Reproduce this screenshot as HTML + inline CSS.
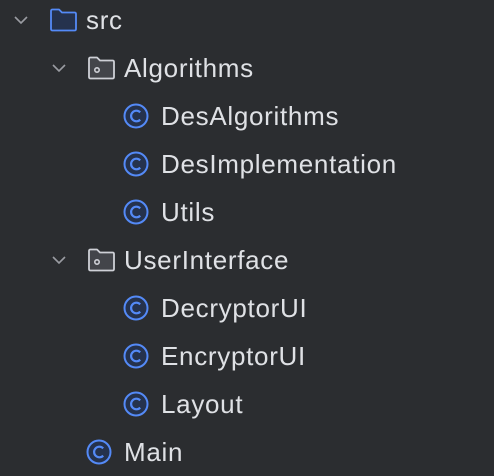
<!DOCTYPE html>
<html><head><style>
html,body{margin:0;padding:0;background:#2b2d30;width:494px;height:474px;overflow:hidden}
.r{position:absolute;height:48px;line-height:48px;font-family:"Liberation Sans",sans-serif;font-size:26px;letter-spacing:0.7px;color:#dfe1e5;white-space:nowrap}
svg{position:absolute}
</style></head><body>
<!-- src -->
<svg style="left:12px;top:11px" width="18" height="18" viewBox="0 0 18 18"><path d="M3 6 L9 12 L15 6" fill="none" stroke="#9a9ca2" stroke-width="1.6"/></svg>
<svg style="left:49px;top:8px" width="29" height="24" viewBox="0 0 29 24"><path d="M2 3 Q2 1.5 3.5 1.5 H10 L13 4.5 H25.5 Q27 4.5 27 6 V21 Q27 22.5 25.5 22.5 H3.5 Q2 22.5 2 21 Z" fill="#25324d" stroke="#548af7" stroke-width="1.8" stroke-linejoin="round"/></svg>
<div class="r" style="left:86px;top:-4px">src</div>
<!-- Algorithms -->
<svg style="left:50px;top:59px" width="18" height="18" viewBox="0 0 18 18"><path d="M3 6 L9 12 L15 6" fill="none" stroke="#9a9ca2" stroke-width="1.6"/></svg>
<svg style="left:87px;top:56px" width="29" height="24" viewBox="0 0 29 24"><path d="M2 3 Q2 1.5 3.5 1.5 H10 L13 4.5 H25.5 Q27 4.5 27 6 V21 Q27 22.5 25.5 22.5 H3.5 Q2 22.5 2 21 Z" fill="#43454a" stroke="#ced0d6" stroke-width="1.8" stroke-linejoin="round"/><circle cx="10" cy="14" r="2.2" fill="none" stroke="#ced0d6" stroke-width="1.6"/></svg>
<div class="r" style="left:124px;top:44px">Algorithms</div>
<!-- classes -->
<svg style="left:123px;top:103px" width="26" height="26" viewBox="0 0 26 26"><circle cx="13" cy="13" r="11.5" fill="#25324d" stroke="#548af7" stroke-width="2"/><path d="M17.2 9.3 A5.3 5.3 0 1 0 17.2 16.7" fill="none" stroke="#548af7" stroke-width="2.2"/></svg>
<div class="r" style="left:161px;top:92px">DesAlgorithms</div>
<svg style="left:123px;top:151px" width="26" height="26" viewBox="0 0 26 26"><circle cx="13" cy="13" r="11.5" fill="#25324d" stroke="#548af7" stroke-width="2"/><path d="M17.2 9.3 A5.3 5.3 0 1 0 17.2 16.7" fill="none" stroke="#548af7" stroke-width="2.2"/></svg>
<div class="r" style="left:161px;top:140px">DesImplementation</div>
<svg style="left:123px;top:199px" width="26" height="26" viewBox="0 0 26 26"><circle cx="13" cy="13" r="11.5" fill="#25324d" stroke="#548af7" stroke-width="2"/><path d="M17.2 9.3 A5.3 5.3 0 1 0 17.2 16.7" fill="none" stroke="#548af7" stroke-width="2.2"/></svg>
<div class="r" style="left:161px;top:188px">Utils</div>
<!-- UserInterface -->
<svg style="left:50px;top:251px" width="18" height="18" viewBox="0 0 18 18"><path d="M3 6 L9 12 L15 6" fill="none" stroke="#9a9ca2" stroke-width="1.6"/></svg>
<svg style="left:87px;top:248px" width="29" height="24" viewBox="0 0 29 24"><path d="M2 3 Q2 1.5 3.5 1.5 H10 L13 4.5 H25.5 Q27 4.5 27 6 V21 Q27 22.5 25.5 22.5 H3.5 Q2 22.5 2 21 Z" fill="#43454a" stroke="#ced0d6" stroke-width="1.8" stroke-linejoin="round"/><circle cx="10" cy="14" r="2.2" fill="none" stroke="#ced0d6" stroke-width="1.6"/></svg>
<div class="r" style="left:124px;top:236px">UserInterface</div>
<svg style="left:123px;top:295px" width="26" height="26" viewBox="0 0 26 26"><circle cx="13" cy="13" r="11.5" fill="#25324d" stroke="#548af7" stroke-width="2"/><path d="M17.2 9.3 A5.3 5.3 0 1 0 17.2 16.7" fill="none" stroke="#548af7" stroke-width="2.2"/></svg>
<div class="r" style="left:161px;top:284px">DecryptorUI</div>
<svg style="left:123px;top:343px" width="26" height="26" viewBox="0 0 26 26"><circle cx="13" cy="13" r="11.5" fill="#25324d" stroke="#548af7" stroke-width="2"/><path d="M17.2 9.3 A5.3 5.3 0 1 0 17.2 16.7" fill="none" stroke="#548af7" stroke-width="2.2"/></svg>
<div class="r" style="left:161px;top:332px">EncryptorUI</div>
<svg style="left:123px;top:391px" width="26" height="26" viewBox="0 0 26 26"><circle cx="13" cy="13" r="11.5" fill="#25324d" stroke="#548af7" stroke-width="2"/><path d="M17.2 9.3 A5.3 5.3 0 1 0 17.2 16.7" fill="none" stroke="#548af7" stroke-width="2.2"/></svg>
<div class="r" style="left:161px;top:380px">Layout</div>
<svg style="left:86px;top:439px" width="26" height="26" viewBox="0 0 26 26"><circle cx="13" cy="13" r="11.5" fill="#25324d" stroke="#548af7" stroke-width="2"/><path d="M17.2 9.3 A5.3 5.3 0 1 0 17.2 16.7" fill="none" stroke="#548af7" stroke-width="2.2"/></svg>
<div class="r" style="left:124px;top:428px">Main</div>
</body></html>
